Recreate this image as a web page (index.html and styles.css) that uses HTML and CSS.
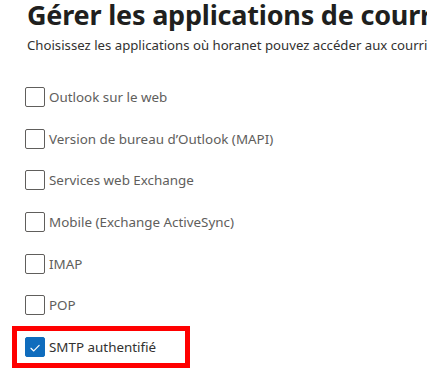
FILE: index.html
```html
<!DOCTYPE html>
<html lang="fr">
<head>
<meta charset="utf-8">
<link rel="stylesheet" href="styles.css">
</head>
<body>
<div class="page">
  <h1 class="title">Gérer les applications de courrier</h1>
  <p class="subtitle">Choisissez les applications où horanet pouvez accéder aux courriers électroniques</p>
  <ul class="list">
    <li class="row"><span class="box"></span><span class="label">Outlook sur le web</span></li>
    <li class="row"><span class="box"></span><span class="label">Version de bureau d’Outlook (MAPI)</span></li>
    <li class="row"><span class="box"></span><span class="label">Services web Exchange</span></li>
    <li class="row"><span class="box"></span><span class="label">Mobile (Exchange ActiveSync)</span></li>
    <li class="row"><span class="box"></span><span class="label">IMAP</span></li>
    <li class="row"><span class="box"></span><span class="label">POP</span></li>
    <li class="row highlighted">
      <span class="box checked"><svg viewBox="0 0 20 20" width="20" height="20"><path d="M5.5 10.3 L8.6 13.3 L14.6 7" fill="none" stroke="#fff" stroke-width="1.3" stroke-linecap="round" stroke-linejoin="round"/></svg></span>
      <span class="label dark">SMTP authentifié</span>
      <span class="redbox"></span>
    </li>
  </ul>
</div>
</body>
</html>
```
FILE: styles.css
```css
html, body {
  margin: 0;
  padding: 0;
  background: #fff;
  overflow: hidden;
}
.page {
  width: 427px;
  height: 382px;
  overflow: hidden;
  white-space: nowrap;
  font-family: "Segoe UI", "Noto Sans", "Open Sans", sans-serif;
  color: #323130;
  padding-left: 27px;
  box-sizing: border-box;
}
.title {
  margin: 0;
  padding-top: 0;
  font-size: 27px;
  line-height: 30px;
  font-weight: 700;
  color: #201f1e;
  letter-spacing: -0.2px;
}
.subtitle {
  margin: 6px 0 0 0;
  font-size: 13.2px;
  line-height: 18px;
  color: #323130;
}
.list {
  list-style: none;
  margin: 22px 0 0 -2px;
  padding: 0;
}
.row {
  position: relative;
  display: flex;
  align-items: center;
  height: 41.7px;
}
.box {
  box-sizing: border-box;
  width: 20px;
  height: 20px;
  border: 1px solid #605e5c;
  border-radius: 2px;
  flex: none;
  display: flex;
}
.box.checked {
  background: #0f6cbd;
  border-color: #0f6cbd;
}
.label {
  margin-left: 4px;
  font-size: 13.4px;
  color: #605e5c;
}
.label.dark {
  color: #323130;
}
.redbox {
  position: absolute;
  left: -13px;
  top: 0;
  width: 178px;
  height: 42px;
  box-sizing: border-box;
  border: 5px solid #ff0000;
}
```
